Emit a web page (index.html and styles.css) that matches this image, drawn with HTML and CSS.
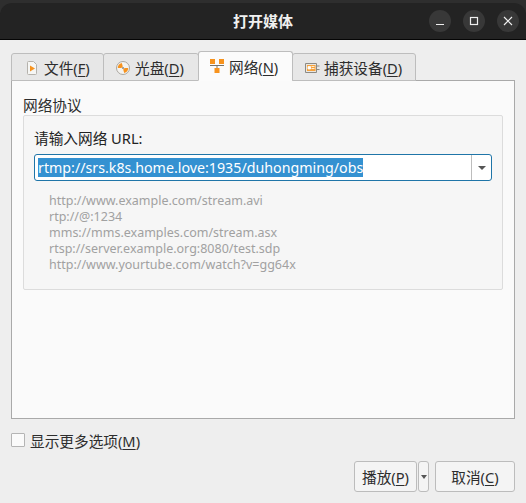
FILE: index.html
```html
<!DOCTYPE html>
<html lang="zh">
<head>
<meta charset="utf-8">
<title>打开媒体</title>
<link rel="stylesheet" href="styles.css">
</head>
<body>
<div class="window">
  <header class="titlebar">
    <h1 class="title">打开媒体</h1>
    <div class="controls">
      <span class="wbtn"><svg width="12" height="12" viewBox="0 0 12 12"><path d="M2 9.500h8" stroke="#eee" stroke-width="1.200"/></svg></span>
      <span class="wbtn"><svg width="12" height="12" viewBox="0 0 12 12"><rect x="2.500" y="2.500" width="7" height="7" fill="none" stroke="#eee" stroke-width="1.200"/></svg></span>
      <span class="wbtn"><svg width="12" height="12" viewBox="0 0 12 12"><path d="M2 2l8 8M10 2l-8 8" stroke="#eee" stroke-width="1.200"/></svg></span>
    </div>
  </header>
  <main class="content">
    <nav class="tabs">
      <div class="tab tab-file">
        <svg class="ico" width="16" height="16" viewBox="0 0 16 16"><path d="M3.500 2.500q0-1 1-1h5l3 3v9q0 1-1 1h-7q-1 0-1-1z" fill="#f6f6f4" stroke="#b5b2ac"/><path d="M6 5.500l5 3-5 3z" fill="#f7931e"/></svg>
        <span>文件(<u>F</u>)</span>
      </div>
      <div class="tab tab-disc">
        <svg class="ico" width="16" height="16" viewBox="0 0 16 16"><circle cx="8" cy="8" r="6.500" fill="#f4f3f0" stroke="#aaa69f"/><path d="M2.800 8a5.200 5.200 0 0 1 4-5l1 3.500-1.500 1.500z M13.200 8a5.200 5.200 0 0 1-4 5l-1-3.500 1.500-1.500z" fill="#f7931e"/><circle cx="8" cy="8" r="1" fill="#8a8780"/></svg>
        <span>光盘(<u>D</u>)</span>
      </div>
      <div class="tab tab-net active">
        <svg class="ico" width="16" height="16" viewBox="0 0 16 16"><rect x="1" y="1" width="5" height="5" fill="#f7931e"/><rect x="10" y="1" width="5" height="5" fill="#f7931e"/><rect x="5.500" y="10" width="5" height="5" fill="#f7931e"/><path d="M1 7.500h14M8 7.500V10" fill="none" stroke="#77736c"/></svg>
        <span>网络(<u>N</u>)</span>
      </div>
      <div class="tab tab-cap">
        <svg class="ico" width="16" height="16" viewBox="0 0 16 16"><path d="M1.500 3.500h11v9h-11z" fill="#e9e7e2" stroke="#8d8a84"/><rect x="3" y="5" width="8.500" height="6" fill="#f7a23b"/><path d="M4 6.500h2.500V9H4zM7.500 6.500h3M7.500 8.500h3" stroke="#fff" fill="#fff" stroke-width=".8"/><path d="M13 6h2.500M13 9.500h2.500" stroke="#8d8a84"/></svg>
        <span>捕获设备(<u>D</u>)</span>
      </div>
    </nav>
    <section class="pane">
      <h2 class="group-title">网络协议</h2>
      <div class="group">
        <label class="url-label">请输入网络 URL:</label>
        <div class="combo">
          <div class="combo-text"><span class="selected">rtmp://srs.k8s.home.love:1935/duhongming/obs</span></div>
          <div class="combo-arrow"><span class="tri"></span></div>
        </div>
        <ul class="hints">
          <li>http://www.example.com/stream.avi</li>
          <li>rtp://@:1234</li>
          <li>mms://mms.examples.com/stream.asx</li>
          <li>rtsp://server.example.org:8080/test.sdp</li>
          <li>http://www.yourtube.com/watch?v=gg64x</li>
        </ul>
      </div>
    </section>
    <div class="more">
      <span class="check"></span>
      <span>显示更多选项(<u>M</u>)</span>
    </div>
    <footer class="actions">
      <button class="btn btn-play">播放(<u>P</u>)</button>
      <button class="btn btn-arrow"><span class="tri tri-small"></span></button>
      <button class="btn btn-cancel">取消(<u>C</u>)</button>
    </footer>
  </main>
</div>
</body>
</html>
```
FILE: styles.css
```css
* { box-sizing: border-box; }
html, body { margin: 0; padding: 0; }
body {
  width: 526px;
  height: 503px;
  overflow: hidden;
  background: #2e2e2e;
  font-family: "Noto Sans", "Noto Sans CJK SC", sans-serif;
  font-size: 14.667px;
  color: #2d2d2d;
}
.window {
  margin-top: 3px;
  height: 500px;
  display: flex;
  flex-direction: column;
  overflow: hidden;
  border-radius: 12px 12px 0 0;
}
.titlebar {
  height: 37px;
  flex: none;
  background: #232323;
  border-bottom: 1px solid #050505;
  display: flex;
  align-items: center;
  justify-content: center;
  position: relative;
}
.title {
  margin: 0;
  font-size: 15px;
  font-weight: 700;
  color: #f0f0f0;
  line-height: 20px;
}
.controls {
  position: absolute;
  top: 7px;
  right: 7px;
  display: flex;
  gap: 12px;
}
.wbtn {
  width: 22px;
  height: 22px;
  border-radius: 50%;
  background: #383838;
  display: flex;
  align-items: center;
  justify-content: center;
}
.content {
  flex: 1;
  background: #eeeeee;
  display: flex;
  flex-direction: column;
  padding: 13px 11px 0 11px;
}
.tabs {
  display: flex;
  height: 28px;
  flex: none;
  margin-bottom: -1px;
  position: relative;
  z-index: 1;
  align-items: flex-end;
}
.tab {
  height: 28px;
  padding-top: 1px;
  display: flex;
  align-items: center;
  gap: 4px;
  background: #e7e7e7;
  border: 1px solid #bdbdbd;
  border-radius: 3px 3px 0 0;
  margin-right: -1px;
  white-space: nowrap;
}
.tab-file { width: 93px; padding-left: 12px; }
.tab-disc { width: 96px; padding-left: 11px; }
.tab-net { width: 95px; padding-left: 10px; }
.tab-cap { width: 124px; padding-left: 11px; }
.tab.active {
  height: 30px;
  padding-top: 0;
  background: #fbfbfb;
  border-color: #bdbdbd #bdbdbd #fbfbfb;
}
.ico { flex: none; }
.pane {
  height: 339px;
  width: 504px;
  flex: none;
  background: #fafafa;
  border: 1px solid #a9a9a9;
  padding: 15px 11px 0;
}
.group-title {
  margin: 0;
  font-size: 14.667px;
  font-weight: 400;
  line-height: 19px;
}
.group {
  background: #f6f6f6;
  border: 1px solid #dcdcdc;
  border-radius: 2px;
  height: 175px;
  padding: 12px 10px 0;
}
.url-label {
  display: block;
  line-height: 20px;
  color: #222;
}
.combo {
  margin-top: 6px;
  height: 27px;
  display: flex;
  background: #fff;
  border: 1px solid #1f75a8;
  border-radius: 3px;
}
.combo-text {
  flex: 1;
  padding-left: 3px;
  display: flex;
  align-items: center;
  border-right: 1px solid #bdbdbd;
}
.selected {
  background: #3491d1;
  color: #fff;
  line-height: 19px;
  font-size: 14.240px;
}
.combo-arrow {
  width: 19px;
  display: flex;
  align-items: center;
  justify-content: center;
}
.tri {
  width: 0;
  height: 0;
  border-left: 4px solid transparent;
  border-right: 4px solid transparent;
  border-top: 4px solid #555;
}
.tri-small {
  display: block;
  border-left-width: 3px;
  border-right-width: 3px;
  border-top-width: 4px;
}
.hints {
  list-style: none;
  margin: 12px 0 0;
  padding: 0 0 0 15px;
  color: #a1a1a1;
  font-size: 12.500px;
  line-height: 16px;
}
.more {
  margin-top: 14px;
  height: 14px;
  display: flex;
  align-items: center;
  gap: 5px;
}
.check {
  width: 14px;
  height: 14px;
  background: #fafafa;
  border: 1px solid #b4b4b4;
  border-radius: 1px;
  flex: none;
}
.actions {
  margin-top: 14px;
  display: flex;
  justify-content: flex-end;
}
.btn {
  height: 31px;
  background: #f4f4f4;
  border: 1px solid #bcbcbc;
  border-radius: 3px;
  font: inherit;
  color: #2d2d2d;
  padding: 0;
  display: flex;
  align-items: center;
  justify-content: center;
}
.btn-play { width: 63px; }
.btn-arrow { width: 11px; margin-left: 1px; }
.btn-cancel { width: 80px; margin-left: 6px; }
u { text-underline-offset: 2px; }
```
